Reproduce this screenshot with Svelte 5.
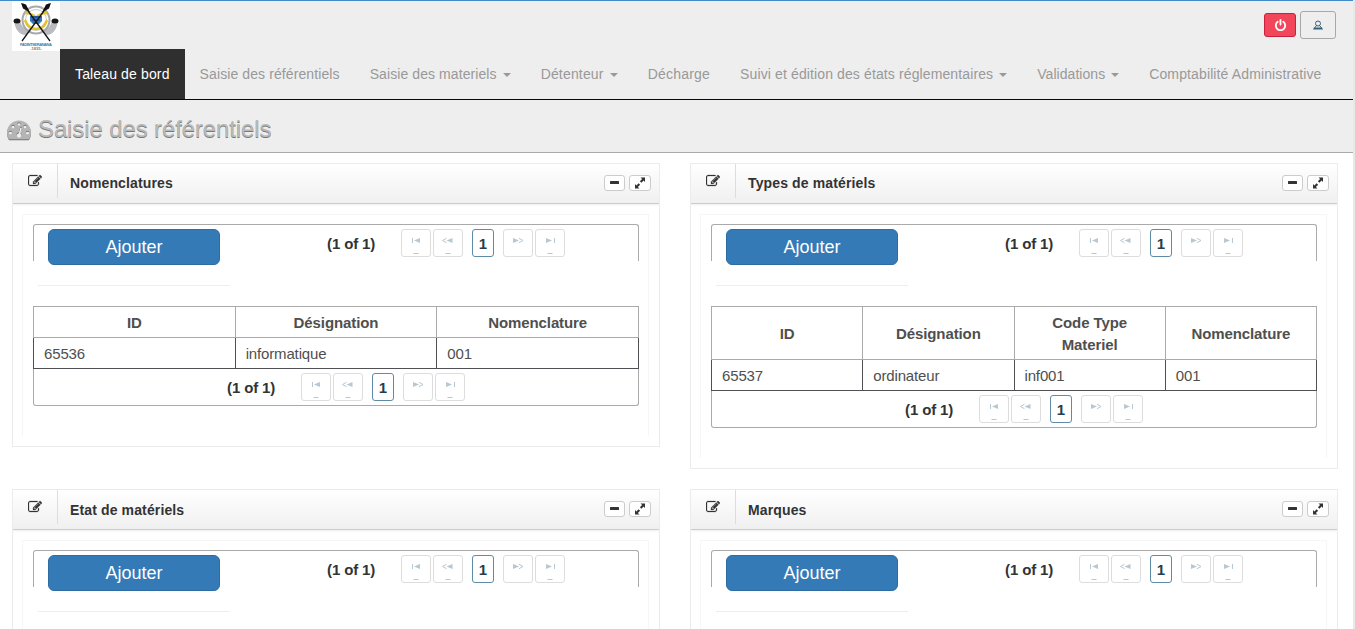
<script>
  const nav = [
    { label: 'Taleau de bord', active: true, spacing: 0.14 },
    { label: 'Saisie des référentiels', spacing: 0.1 },
    { label: 'Saisie des materiels', menu: true, spacing: 0.085 },
    { label: 'Détenteur', menu: true, spacing: 0.17 },
    { label: 'Décharge', spacing: 0.22 },
    { label: 'Suivi et édition des états réglementaires', menu: true, spacing: 0.118 },
    { label: 'Validations', menu: true, spacing: 0.05 },
    { label: 'Comptabilité Administrative', spacing: 0.125 }
  ];

  const cards = [
    { title: 'Nomenclatures', columns: ['ID', 'Désignation', 'Nomenclature'], row: ['65536', 'informatique', '001'] },
    { title: 'Types de matériels', columns: ['ID', 'Désignation', 'Code Type Materiel', 'Nomenclature'], row: ['65537', 'ordinateur', 'inf001', '001'] },
    { title: 'Etat de matériels' },
    { title: 'Marques' }
  ];
</script>

{#snippet pager()}
  <span class="count">(1 of 1)</span>
  <span class="pg first"><svg viewBox="0 0 30 28"><path d="M11 9h1v5h-1zM19 9v5l-6-2.500z" /><path d="M12 24h6l-1 1h-4z" /></svg></span>
  <span class="pg"><svg viewBox="0 0 30 28"><path d="M19.500 9v5l-6-2.500z" /><path class="line" d="M13.500 9.300L9.500 11.500l4 2.200" /><path d="M12 24h6l-1 1h-4z" /></svg></span>
  <span class="pg current">1</span>
  <span class="pg"><svg viewBox="0 0 30 28"><path d="M10 9v5l6-2.500z" /><path class="line" d="M16 9.300l4 2.200-4 2.200" /></svg></span>
  <span class="pg"><svg viewBox="0 0 30 28"><path d="M11 9v5l6-2.500zM19 9h1v5h-1z" /><path d="M12 24h6l-1 1h-4z" /></svg></span>
{/snippet}

<div class="page">
  <header>
    <div class="top">
      <svg class="logo" viewBox="0 0 48 50">
        <path fill="#fff" d="M0 0h48v50H0z" />
        <path d="M2 20c1 8 5 14 12 14l6-6c-6 2-11-2-12-9zM46 20c-1 8-5 14-12 14l-6-6c6 2 11-2 12-9z" fill="#b9bbc0" />
        <circle cx="24" cy="19" r="13.500" fill="none" stroke="#a6a8ac" stroke-width="2" />
        <circle cx="24" cy="19" r="10.500" fill="none" stroke="#c8cacc" />
        <path d="M13 12c5 0 8 1 11 5 3-4 6-5 11-5M13 19c2 6 5 9 11 9s9-3 11-9" fill="none" stroke="#e2c330" stroke-width="2.600" />
        <path d="M18 15h12v5l-3 3h-6l-3-3z" fill="#3477bd" />
        <path d="M19 16h10M20 19h8" stroke="#173e6d" />
        <path d="M11 3l27 37M37 3L10 40" stroke="#161616" stroke-width="1.300" />
        <path d="M9 2l5 1.500 4 8-7-4zM39 2l-5 1.500-4 8 7-4z" fill="#111" />
        <ellipse cx="5" cy="20" rx="3.500" ry="2.500" fill="#161616" /><ellipse cx="43" cy="20" rx="3.500" ry="2.500" fill="#161616" />
        <text x="24" y="44.500" text-anchor="middle" textLength="32" class="crest">FADINTSERANANA</text>
        <text x="24" y="49" text-anchor="middle" class="year">-1835-</text>
      </svg>
      <div class="actions">
        <button class="power" aria-label="Déconnexion"><svg viewBox="0 0 1792 1792"><path d="M1664 896q0 156-61 298t-164 245-245 164-298 61-298-61-245-164-164-245-61-298q0-182 80.500-343t226.500-270q43-32 95.500-25t83.500 50q32 42 24.500 94.500t-49.500 84.500q-98 74-151.500 181t-53.500 228q0 104 40.500 198.500t109.500 163.500 163.500 109.500 198.500 40.500 198.500-40.500 163.500-109.500 109.500-163.500 40.500-198.500q0-121-53.500-228t-151.500-181q-42-32-49.500-84.500t24.500-94.500q31-43 84-50t95 25q146 109 226.500 270t80.500 343zm-640-768v640q0 52-38 90t-90 38-90-38-38-90v-640q0-52 38-90t90-38 90 38 38 90z" /></svg></button>
        <button class="user" aria-label="Profil"><svg viewBox="0 0 10 10"><circle cx="5" cy="3.500" r="2.500" /><path d="M3.500 5.500L1.500 8M6.500 5.500L8.500 8" /><path class="base" d="M1 7.500h8l1 2H0z" /></svg></button>
      </div>
    </div>
    <nav>
      {#each nav as item}
        <a class:active={item.active} href="#{item.label}"><span style="letter-spacing: {item.spacing}px">{item.label}</span>{#if item.menu}<b class="caret"></b>{/if}</a>
      {/each}
    </nav>
  </header>

  <h1>
    <svg viewBox="0 0 1792 1792"><path d="M384 1152q0-53-37.500-90.500t-90.500-37.500-90.500 37.500-37.500 90.500 37.500 90.500 90.500 37.500 90.500-37.500 37.500-90.500zm192-448q0-53-37.500-90.500t-90.500-37.500-90.500 37.500-37.500 90.500 37.500 90.500 90.500 37.500 90.500-37.500 37.500-90.500zm428 481l101-382q6-26-7.500-48.500t-38.500-29.500-48 6.500-30 39.500l-101 382q-60 5-107 43.500t-63 98.500q-20 77 20 146t117 89 146-20 89-117q16-60-6-117t-72-91zm660-33q0-53-37.500-90.500t-90.500-37.500-90.500 37.500-37.500 90.500 37.500 90.500 90.500 37.500 90.500-37.500 37.500-90.500zm-640-640q0-53-37.500-90.500t-90.500-37.500-90.500 37.500-37.500 90.500 37.500 90.500 90.500 37.500 90.500-37.500 37.500-90.500zm448 192q0-53-37.500-90.500t-90.500-37.500-90.500 37.500-37.500 90.500 37.500 90.500 90.500 37.500 90.500-37.500 37.500-90.500zm320 448q0 261-141 483-19 29-54 29h-1402q-35 0-54-29-141-221-141-483 0-182 71-348t191-286 286-191 348-71 348 71 286 191 191 286 71 348z" /></svg>
    <span>Saisie des référentiels</span>
  </h1>

  <main>
    {#each cards as card}
      <section>
        <div class="head">
          <span class="edit"><svg viewBox="0 0 1792 1792"><path d="M888 1184l116-116-152-152-116 116v56h96v96h56zm440-720q-16-16-33 1l-350 350q-17 17-1 33t33-1l350-350q17-17 1-33zm80 594v190q0 119-84.500 203.500t-203.500 84.500h-832q-119 0-203.500-84.500t-84.500-203.500v-832q0-119 84.500-203.500t203.500-84.500h832q63 0 117 25 15 7 18 23 3 17-9 29l-49 49q-14 14-32 8-23-6-45-6h-832q-66 0-113 47t-47 113v832q0 66 47 113t113 47h832q66 0 113-47t47-113v-126q0-13 9-22l64-64q15-15 35-7t20 29zm-96-738l288 288-672 672h-288v-288zm444 132l-92 92-288-288 92-92q28-28 68-28t68 28l152 152q28 28 28 68t-28 68z" /></svg></span>
          <h2>{card.title}</h2>
          <span class="tool"><svg viewBox="0 0 19 14"><path d="M5.500 5h8a.5.5 0 0 1 .5.5v2a.5.5 0 0 1-.5.5h-8a.5.5 0 0 1-.5-.5v-2a.5.5 0 0 1 .5-.5z" /></svg></span>
          <span class="tool wide"><svg viewBox="0 0 20 14"><path d="M10.500 1.500H15V6l-1.400-1.400-2.200 2.200-1.500-1.500L12.100 3zM9.500 12.500H5V8l1.400 1.400 2.200-2.200 1.500 1.500L7.900 11z" /></svg></span>
        </div>
        <div class="body">
          <div class="toolbar">
            <button class="add">Ajouter</button>
            {@render pager()}
          </div>
          <hr />
          {#if card.columns}
            <table>
              <thead><tr>{#each card.columns as column}<th>{column}</th>{/each}</tr></thead>
              <tbody><tr>{#each card.row as cell}<td>{cell}</td>{/each}</tr></tbody>
            </table>
            <div class="foot">{@render pager()}</div>
          {/if}
        </div>
      </section>
    {/each}
  </main>
</div>

<style>
  :global(body) { background: #e9e9e9; overflow: hidden; }
  .page { box-sizing: border-box; width: 1353px; height: 629px; overflow: hidden; background: #fff; font-family: "Liberation Sans", Arial, sans-serif; font-size: 14px; color: #333; }
  .page * { box-sizing: border-box; }
  header { height: 100px; border-top: 1px solid #428bca; border-bottom: 1px solid #080808; background: #eee; }
  .top { display: flex; justify-content: space-between; height: 48px; padding: 0 17px 0 12px; }
  .logo { width: 48px; height: 50px; flex: none; }
  .crest { font-size: 4px; font-weight: bold; fill: #2788b8; }
  .year { font-size: 4px; font-weight: bold; fill: #777; }
  .actions { display: flex; align-items: center; gap: 4px; }
  button { display: flex; align-items: center; justify-content: center; padding: 0; font-family: inherit; }
  .power { width: 32px; height: 24px; border: 1px solid #c9203f; border-radius: 3px; background: #f2465b; }
  .power svg { width: 13px; height: 13px; fill: #fff; }
  .user { width: 36px; height: 28px; border: 1px solid #a8a8a8; border-radius: 3px; background: #eee; }
  .user svg { width: 10px; height: 10px; fill: none; stroke: #36617c; stroke-width: 1; }
  .user .base { fill: #36617c; stroke: none; }
  nav { display: flex; height: 50px; padding-left: 60px; }
  nav a { flex: none; padding: 15px; line-height: 20px; white-space: nowrap; text-decoration: none; color: #999; }
  nav a.active { background: #2f2f2f; color: #fff; }
  .caret { display: inline-block; margin-left: 6px; vertical-align: middle; border: 4px solid transparent; border-top-color: #999; border-bottom: 0; }
  h1 { display: flex; align-items: center; gap: 7px; height: 53px; margin: 0; padding: 6px 7px 0; border-bottom: 1px solid #aaa; background: #eee; font-size: 24px; font-weight: normal; letter-spacing: -0.12px; color: #b9b9b9; text-shadow: 0 1px 0 #777; }
  h1 svg { width: 24px; height: 24px; fill: #b5b5b5; filter: drop-shadow(0 1px 0 #777); }
  main { display: grid; grid-template-columns: 648px 648px; column-gap: 30px; row-gap: 20px; align-items: start; padding: 10px 12px; }
  section { border: 1px solid #ebebeb; }
  .head { display: flex; height: 40px; padding-right: 8px; border-bottom: 1px solid #ccc; background: linear-gradient(#fff, #f0f0f0); box-shadow: 0 1px 2px #eee; }
  .edit { width: 45px; height: 34px; padding: 10px 0 0 15px; border-right: 1px solid #ddd; }
  .edit svg { display: block; width: 14px; height: 14px; fill: #333; stroke: #333; stroke-width: 30; }
  h2 { flex: 1; margin: 0; padding-left: 12px; font-size: 14px; font-weight: bold; line-height: 38px; letter-spacing: 0.13px; color: #333; }
  section:nth-child(n + 3) h2 { line-height: 40px; }
  .tool { width: 21px; height: 16px; margin: 11px 4px 0 0; border: 1px solid #ccc; border-radius: 3px; background: #fff; }
  .tool.wide { width: 22px; margin-right: 0; }
  .tool svg { display: block; width: 100%; height: 14px; fill: #333; }
  .body { margin: 10px 10px 10px 9px; padding: 9px 9px 30px 10px; border: 1px solid #f6f6f6; border-bottom: 0; }
  .toolbar, .foot { display: flex; align-items: flex-start; font-size: 15px; }
  .toolbar { height: 37px; padding: 4px 14px 0; border: 1px solid #aaa; border-bottom: 0; border-radius: 3px 3px 0 0; }
  .add { flex: none; width: 172px; height: 36px; margin-right: 107px; border: 1px solid #2e6da4; border-radius: 6px; background: #337ab7; font-size: 18px; color: #fff; }
  .count { width: 74px; font-weight: bold; line-height: 30px; letter-spacing: -0.12px; white-space: nowrap; }
  .pg { width: 30px; height: 28px; margin-right: 2px; border: 1px solid #ddd; border-radius: 3px; }
  .pg svg { display: block; width: 30px; height: 28px; margin: -1px; fill: #b9c7d0; }
  .pg .line { fill: none; stroke: #b9c7d0; }
  .current { width: 22px; margin: 0 9px 0 7px; border-color: #5e8ca8; font-weight: bold; line-height: 28px; text-align: center; color: #253d4c; }
  hr { width: 192px; margin: 24px 0 20px 5px; border: 0; border-top: 1px solid #eee; }
  table { width: 606px; table-layout: fixed; border-collapse: collapse; font-size: 15px; line-height: 22px; color: #4f4f4f; }
  th { padding: 5px 10px 3px; border: 1px solid #aaa; letter-spacing: -0.1px; }
  td { padding: 5px 10px 3px; border: 1px solid #4f4f54; letter-spacing: -0.15px; }
  .foot { height: 37px; padding: 4px 0 0 193px; border: 1px solid #aaa; border-top: 0; border-radius: 0 0 3px 3px; }
</style>
